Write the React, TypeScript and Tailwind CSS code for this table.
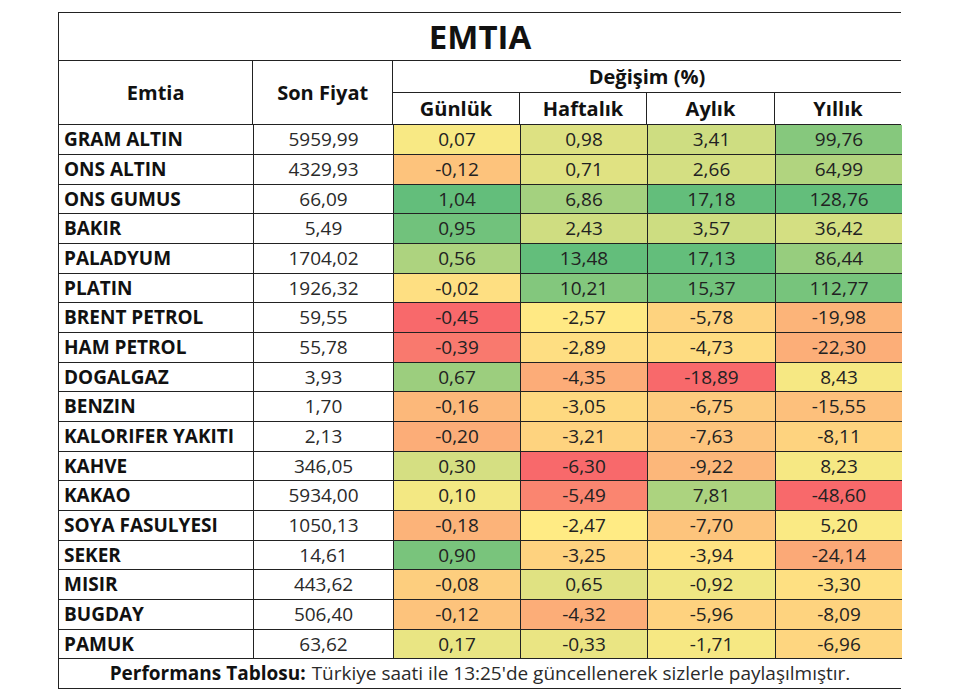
import React from "react";

type Row = { name: string; price: string; d: number; w: number; m: number; y: number };

const rows: Row[] = [
  { name: "GRAM ALTIN", price: "5959,99", d: 0.07, w: 0.98, m: 3.41, y: 99.76 },
  { name: "ONS ALTIN", price: "4329,93", d: -0.12, w: 0.71, m: 2.66, y: 64.99 },
  { name: "ONS GUMUS", price: "66,09", d: 1.04, w: 6.86, m: 17.18, y: 128.76 },
  { name: "BAKIR", price: "5,49", d: 0.95, w: 2.43, m: 3.57, y: 36.42 },
  { name: "PALADYUM", price: "1704,02", d: 0.56, w: 13.48, m: 17.13, y: 86.44 },
  { name: "PLATIN", price: "1926,32", d: -0.02, w: 10.21, m: 15.37, y: 112.77 },
  { name: "BRENT PETROL", price: "59,55", d: -0.45, w: -2.57, m: -5.78, y: -19.98 },
  { name: "HAM PETROL", price: "55,78", d: -0.39, w: -2.89, m: -4.73, y: -22.3 },
  { name: "DOGALGAZ", price: "3,93", d: 0.67, w: -4.35, m: -18.89, y: 8.43 },
  { name: "BENZIN", price: "1,70", d: -0.16, w: -3.05, m: -6.75, y: -15.55 },
  { name: "KALORIFER YAKITI", price: "2,13", d: -0.2, w: -3.21, m: -7.63, y: -8.11 },
  { name: "KAHVE", price: "346,05", d: 0.3, w: -6.3, m: -9.22, y: 8.23 },
  { name: "KAKAO", price: "5934,00", d: 0.1, w: -5.49, m: 7.81, y: -48.6 },
  { name: "SOYA FASULYESI", price: "1050,13", d: -0.18, w: -2.47, m: -7.7, y: 5.2 },
  { name: "SEKER", price: "14,61", d: 0.9, w: -3.25, m: -3.94, y: -24.14 },
  { name: "MISIR", price: "443,62", d: -0.08, w: 0.65, m: -0.92, y: -3.3 },
  { name: "BUGDAY", price: "506,40", d: -0.12, w: -4.32, m: -5.96, y: -8.09 },
  { name: "PAMUK", price: "63,62", d: 0.17, w: -0.33, m: -1.71, y: -6.96 },
];

const heights = ["h-[30px]", "h-[30px]", "h-[29px]"];

const RED = [248, 105, 107];
const YEL = [255, 235, 132];
const GRN = [99, 190, 123];

// excel style 3-colour scale: min red, median yellow, max green
function scale(values: number[]) {
  const s = [...values].sort((a, b) => a - b);
  const n = s.length;
  const mid = n % 2 ? s[(n - 1) / 2] : (s[n / 2 - 1] + s[n / 2]) / 2;
  const min = s[0];
  const max = s[n - 1];
  return (v: number) => {
    let a: number[], b: number[], t: number;
    if (v <= mid) {
      a = RED;
      b = YEL;
      t = (v - min) / (mid - min || 1);
    } else {
      a = YEL;
      b = GRN;
      t = (v - mid) / (max - mid || 1);
    }
    const c = a.map((x, i) => Math.round(x + (b[i] - x) * t));
    return `rgb(${c[0]}, ${c[1]}, ${c[2]})`;
  };
}

const keys: ("d" | "w" | "m" | "y")[] = ["d", "w", "m", "y"];
const scales = keys.map((k) => scale(rows.map((r) => r[k])));

const fmt = (v: number) => v.toFixed(2).replace(".", ",");

const App = () => {
  return (
    <div
      className="min-h-screen bg-white pl-[58px] pt-[12px] text-[#222] leading-none"
      style={{ fontFamily: "'Open Sans', Lato, sans-serif" }}
    >
      <div className="w-[843px] border-l border-t border-[#222]">
        {/* Title */}
        <div className="h-[48px] border-b border-[#222] flex items-center justify-center">
          <span className="text-[33px] font-bold text-[#111]">EMTIA</span>
        </div>

        {/* Header */}
        <div className="flex">
          <div className="w-[195px] h-[64px] border-r border-b border-[#222] flex items-center justify-center text-[20px] font-bold text-[#111]">
            Emtia
          </div>
          <div className="w-[140px] h-[64px] border-r border-b border-[#222] flex items-center justify-center text-[20px] font-bold text-[#111]">
            Son Fiyat
          </div>
          <div className="flex-1">
            <div className="h-[32px] border-b border-[#222] flex items-center justify-center text-[20px] font-bold text-[#111]">
              Değişim (%)
            </div>
            <div className="grid grid-cols-[127px_127px_128px_126px] h-[32px]">
              {["Günlük", "Haftalık", "Aylık", "Yıllık"].map((h, i) => (
                <div
                  key={h}
                  className={`border-b border-[#222] flex items-center justify-center text-[20px] font-bold text-[#111] ${
                    i < 3 ? "border-r" : ""
                  }`}
                >
                  {h}
                </div>
              ))}
            </div>
          </div>
        </div>

        {/* Data rows */}
        {rows.map((r, ri) => (
          <div
            key={r.name}
            className={`grid grid-cols-[195px_140px_127px_127px_128px_126px] ${heights[ri % 3]}`}
          >
            <div className="border-r border-b border-[#222] flex items-center pl-[5px] text-[19px] font-bold text-[#111] whitespace-nowrap">
              {r.name}
            </div>
            <div className="border-r border-b border-[#222] flex items-center justify-center text-[19px] text-[#2a2a2a]">
              {r.price}
            </div>
            {keys.map((k, ki) => (
              <div
                key={k}
                className={`border-b border-[#222] flex items-center justify-center text-[19px] text-[#222] ${
                  ki < 3 ? "border-r" : ""
                }`}
                style={{ backgroundColor: scales[ki](r[k]) }}
              >
                {fmt(r[k])}
              </div>
            ))}
          </div>
        ))}

        {/* Footer */}
        <div className="h-[30px] border-b border-[#222] flex items-center justify-center text-[19px] text-[#2a2a2a] whitespace-nowrap">
          <span className="font-bold text-[#111] mr-[6px]">Performans Tablosu:</span>
          Türkiye saati ile 13:25'de güncellenerek sizlerle paylaşılmıştır.
        </div>
      </div>
    </div>
  );
};

export default App;
